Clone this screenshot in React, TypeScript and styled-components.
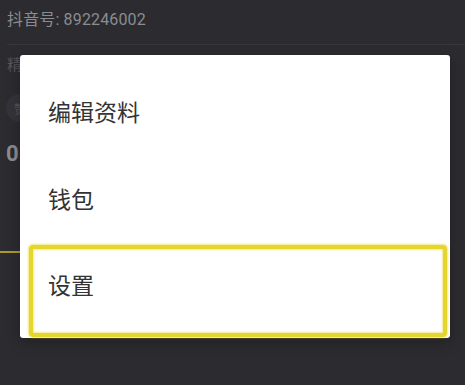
import styled, { createGlobalStyle } from "styled-components";

const GlobalStyle = createGlobalStyle`
  html, body {
    margin: 0;
    padding: 0;
    background: #2b2b30;
  }
  body {
    font-family: Roboto, "Noto Sans CJK SC", sans-serif;
  }
`;

const menuItems = [
  { label: "编辑资料", active: false },
  { label: "钱包", active: false },
  { label: "设置", active: true },
];

const App: React.FC = () => {
  return (
    <>
      <GlobalStyle />
      <Screen>
        <Profile>
          <DouyinId>抖音号: 892246002</DouyinId>
          <Divider />
          <Tag>精</Tag>
          <Avatar>
            <AvatarText>赞</AvatarText>
          </Avatar>
          <Count>0</Count>
          <TabLine />
        </Profile>
        <Dialog>
          {menuItems.map((item) => (
            <MenuItem key={item.label} $active={item.active}>
              {item.label}
            </MenuItem>
          ))}
        </Dialog>
      </Screen>
    </>
  );
};

export default App;

const Screen = styled.div`
  position: relative;
  width: 465px;
  height: 385px;
  overflow: hidden;
  background: #2b2b30;
`;

const Profile = styled.div`
  display: flex;
  flex-direction: column;
  padding-top: 10px;
`;

const DouyinId = styled.div`
  padding-left: 7px;
  font-size: 16px;
  line-height: 20px;
  color: #8b8b90;
  letter-spacing: 0.15px;
`;

const Divider = styled.div`
  margin: 14px 0 0 7px;
  height: 1px;
  background: #36363c;
`;

const Tag = styled.div`
  margin: 11px 0 0 7px;
  font-size: 15px;
  line-height: 18px;
  color: #55555b;
`;

const Avatar = styled.div`
  margin: 20px 0 0 6px;
  width: 28px;
  height: 28px;
  border-radius: 50%;
  background: #333339;
  display: flex;
  align-items: center;
  justify-content: center;
`;

const AvatarText = styled.span`
  font-size: 12px;
  color: #55555b;
`;

const Count = styled.div`
  margin: 20px 0 0 6px;
  font-size: 22px;
  font-weight: 700;
  line-height: 24px;
  color: #8a8a8f;
`;

const TabLine = styled.div`
  margin-top: 85px;
  width: 22px;
  height: 2px;
  background: #a89a2c;
`;

const Dialog = styled.div`
  position: absolute;
  left: 20px;
  top: 55px;
  width: 430px;
  height: 283px;
  background: #ffffff;
  border-radius: 3px;
  box-shadow: 0 4px 14px rgba(0, 0, 0, 0.25);
  display: flex;
  flex-direction: column;
  padding: 12px 3px 0 9px;
  box-sizing: border-box;
`;

const MenuItem = styled.div<{ $active: boolean }>`
  box-sizing: border-box;
  height: ${(p) => (p.$active ? "92px" : "87px")};
  margin-top: ${(p) => (p.$active ? "4px" : "0")};
  padding: 0 0 ${(p) => (p.$active ? "14px" : "0")} 15px;
  display: flex;
  align-items: center;
  font-size: 23px;
  color: #333333;
  border: 4px solid ${(p) => (p.$active ? "#e4d62c" : "transparent")};
  border-radius: 4px;
  box-shadow: ${(p) =>
    p.$active
      ? "0 0 2px 1px rgba(228, 214, 44, 0.6), inset 0 0 2px 1px rgba(228, 214, 44, 0.5)"
      : "none"};
`;
